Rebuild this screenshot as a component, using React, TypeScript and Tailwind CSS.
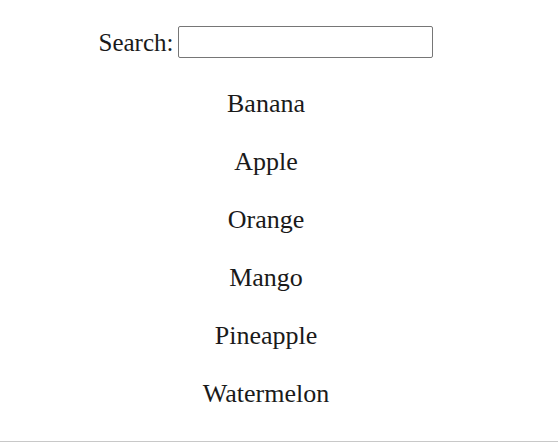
import React, { useState } from 'react';

const fruits = ['Banana', 'Apple', 'Orange', 'Mango', 'Pineapple', 'Watermelon'];

export default function App() {
  const [query, setQuery] = useState('');
  const shown = fruits.filter((f) => f.toLowerCase().includes(query.toLowerCase()));

  return (
    <div className="w-[558px] bg-white font-['Liberation_Serif',serif] text-[#1a1a1a] border-b border-[#c8c8c8]">
      <div className="w-[532px] flex flex-col items-center pt-[26px] pb-[19px]">
        <div className="flex items-center h-[32px]">
          <label className="text-[25px] leading-none mr-[5px]">Search:</label>
          <input
            value={query}
            onChange={(e) => setQuery(e.target.value)}
            className="w-[255px] h-[32px] border border-[#767676] rounded-[2px] px-1 text-[18px] outline-none"
          />
        </div>
        <ul className="mt-[16px] flex flex-col items-center">
          {shown.map((f) => (
            <li key={f} className="h-[58px] flex items-center text-[26px]">
              {f}
            </li>
          ))}
        </ul>
      </div>
    </div>
  );
}
